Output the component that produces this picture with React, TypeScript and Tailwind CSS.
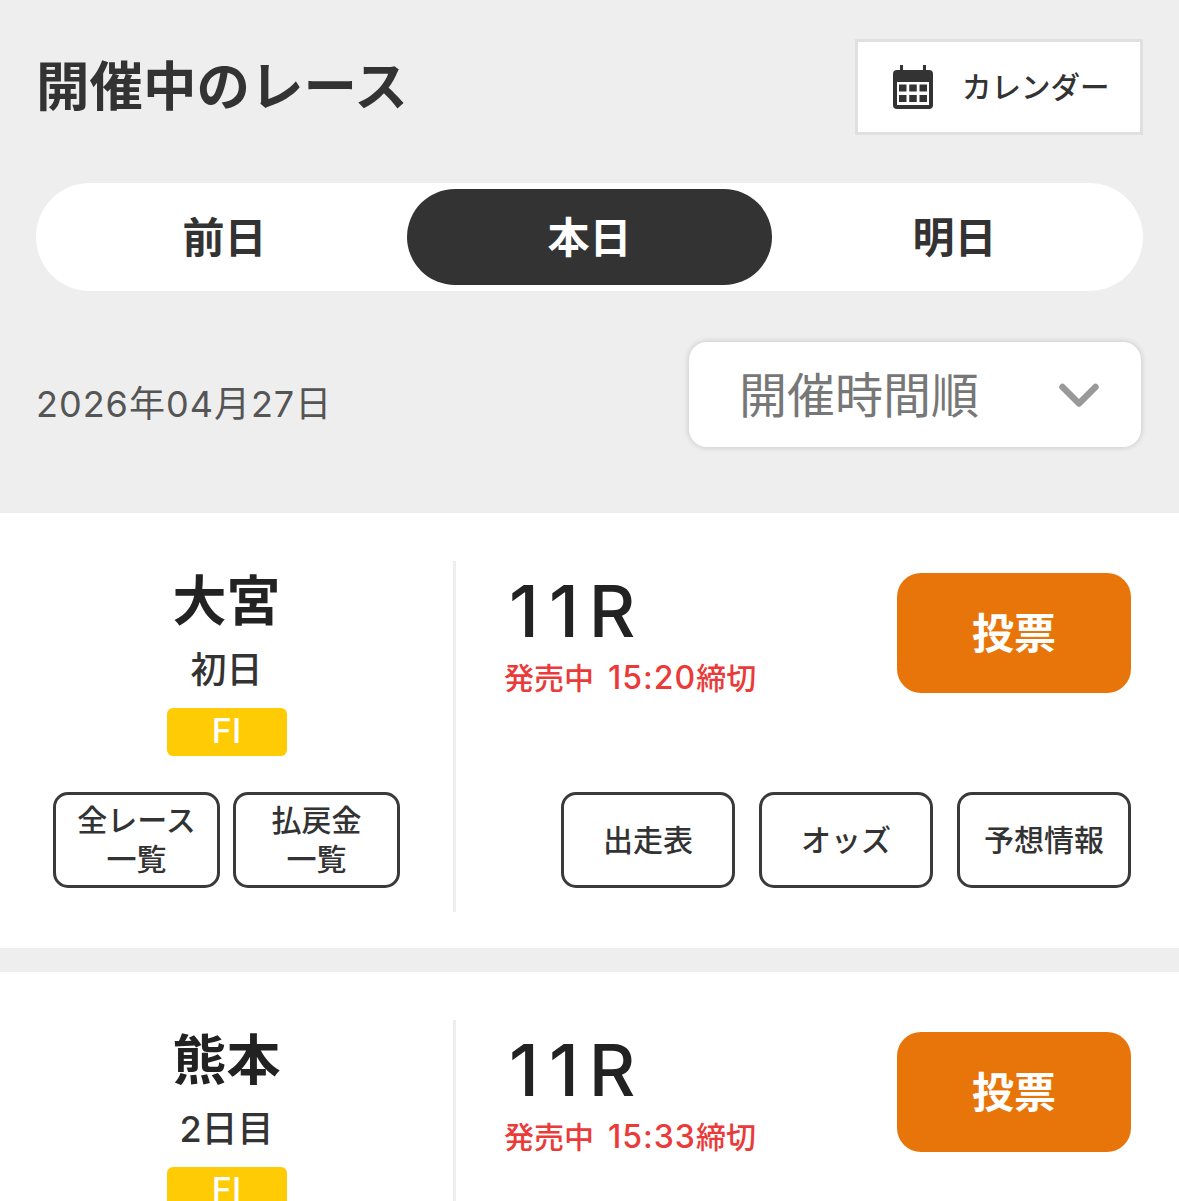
const font = "font-['Inter','Noto_Sans_CJK_JP',sans-serif]";

const CalendarIcon = () => (
  <svg width="40" height="44" viewBox="0 0 40 44" className="shrink-0">
    <path d="M7 0h3v5h20V0h3v5h3a4 4 0 0 1 4 4v31a4 4 0 0 1-4 4H4a4 4 0 0 1-4-4V9a4 4 0 0 1 4-4h3z" fill="#333" />
    <rect x="4" y="17" width="32" height="23" fill="#fff" />
    <path d="M6 19.500h7.500v7H6zM16.250 19.500h7.500v7h-7.500zM26.500 19.500H34v7h-7.500zM6 30h7.500v7H6zM16.250 30h7.500v7h-7.500zM26.500 30H34v7h-7.500z" fill="#333" />
  </svg>
);

const OutlineButton = ({ label, className }: { label: React.ReactNode; className: string }) => (
  <div className={`flex h-[96px] items-center justify-center rounded-[15px] border-[3px] border-[#3a3a3a] bg-white text-center text-[30px] leading-[39px] font-medium text-[#333] ${className}`}>
    {label}
  </div>
);

const RaceCard = ({ venue, day, time }: { venue: string; day: string; time: string }) => (
  <section className="bg-white pt-12 pb-9">
    <div className="flex h-[351px]">
      <div className="flex w-[456px] shrink-0 flex-col items-center border-r-[3px] border-[#eee]">
        <h3 className="mt-[8px] text-[54px] leading-[66px] font-bold text-[#222]">{venue}</h3>
        <p className="mt-[11px] text-[36px] leading-[48px] font-medium text-[#333]">{day}</p>
        <div className="mt-[14px] flex h-12 w-[120px] items-center justify-center rounded-[6px] bg-[#ffcb05] pb-[3px] text-[34px] font-medium text-white">FI</div>
        <div className="mt-9 flex gap-[13px]">
          <OutlineButton className="w-[167px]" label={<>全レース<br />一覧</>} />
          <OutlineButton className="w-[167px]" label={<>払戻金<br />一覧</>} />
        </div>
      </div>
      <div className="flex min-w-0 flex-1 flex-col pr-[48px] pl-[49px]">
        <div className="mt-3 flex items-start justify-between">
          <div>
            <div className="ml-[4px] text-[72px] leading-[76px] font-medium tracking-[10px] text-[#222]">11R</div>
            <div className="mt-[9px] -ml-[1px] text-[30px] leading-[40px] font-medium whitespace-nowrap text-[#ea3a3a]">
              発売中<span className="ml-[14px] text-[32px] tracking-[1px]">{time}</span>締切
            </div>
          </div>
          <div className="flex h-[120px] w-[234px] items-center justify-center rounded-[24px] bg-[#e8750a] text-[42px] font-bold text-white">投票</div>
        </div>
        <div className="mt-[94px] flex justify-end gap-6">
          <OutlineButton className="w-[174px]" label="出走表" />
          <OutlineButton className="w-[174px]" label="オッズ" />
          <OutlineButton className="w-[174px]" label="予想情報" />
        </div>
      </div>
    </div>
  </section>
);

export default function App() {
  return (
    <div className={`${font} h-[1201px] w-full overflow-hidden bg-[#eee]`}>
      <div className="pt-[39px] pr-9 pb-[66px] pl-9">
        <div className="flex items-center justify-between">
          <h2 className="text-[53.5px] font-bold text-[#333]">開催中のレース</h2>
          <button className="flex h-[96px] w-[288px] items-center gap-[29px] border-[3px] border-[#e0e0e0] bg-white pl-[35px] text-[29.500px] font-medium text-[#333]">
            <CalendarIcon />
            <span className="whitespace-nowrap">カレンダー</span>
          </button>
        </div>
        <div className="mt-12 grid h-[108px] grid-cols-3 items-center rounded-full bg-white px-[6px] text-[42px] font-semibold text-[#333]">
          <div className="pt-px text-center">前日</div>
          <div className="flex h-24 items-center justify-center rounded-full bg-[#333] pt-px text-white">本日</div>
          <div className="pt-px text-center">明日</div>
        </div>
        <div className="mt-[51px] flex items-center justify-between pr-[2px]">
          <p className="mt-[18px] text-[36px] tracking-[1px] text-[#555]">2026年04月27日</p>
          <div className="flex h-[105px] w-[452px] items-center justify-between rounded-[18px] bg-white pr-[42px] pl-[50px] text-[48px] text-[#777] shadow-[0_0_6px_rgba(0,0,0,0.18)]">
            <span className="mt-[3px]">開催時間順</span>
            <svg width="40" height="26" viewBox="0 0 40 26" className="mt-[3px]" fill="none">
              <path d="M3.500 4 20 20.500 36.500 4" stroke="#999" strokeWidth="6.500" strokeLinecap="round" strokeLinejoin="round" />
            </svg>
          </div>
        </div>
      </div>
      <div className="flex flex-col gap-6">
        <RaceCard venue="大宮" day="初日" time="15:20" />
        <RaceCard venue="熊本" day="2日目" time="15:33" />
      </div>
    </div>
  );
}
